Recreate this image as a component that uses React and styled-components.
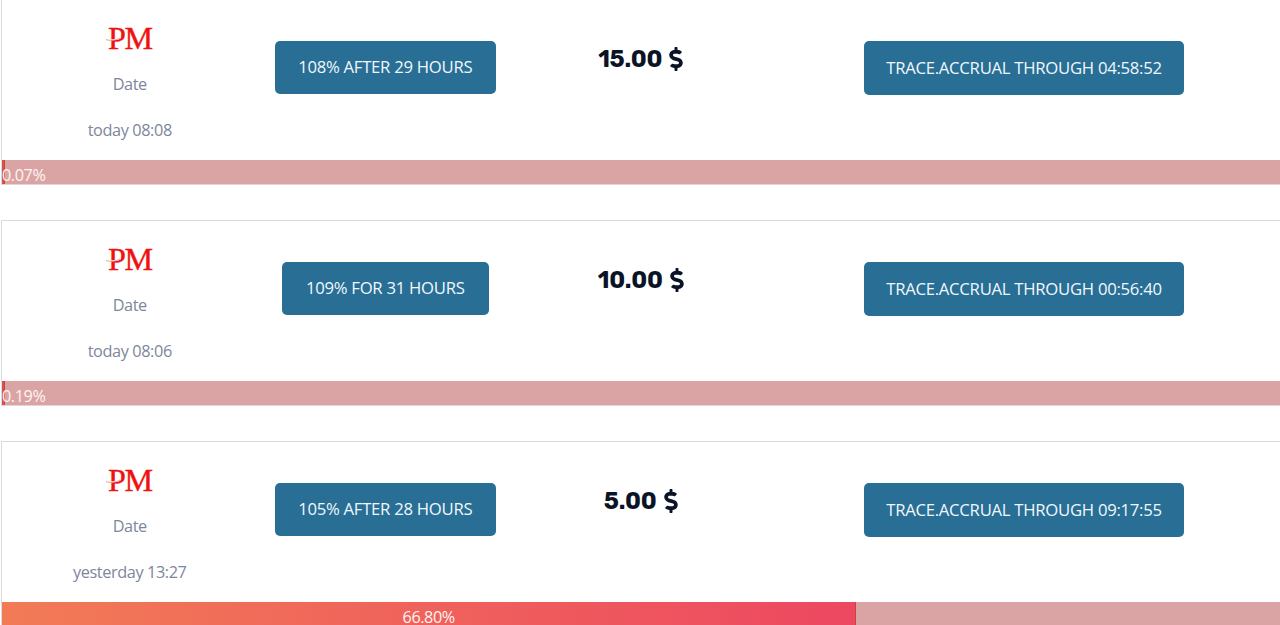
import styled, { createGlobalStyle } from "styled-components";
import { FaDollarSign } from "react-icons/fa";

const GlobalStyle = createGlobalStyle`
    * {
        box-sizing: border-box;
    }

    body {
        margin: 0;
        overflow: hidden;
        background-color: #fff;
        font-family: "Open Sans", "Noto Sans", sans-serif;
        font-size: 16.3px;
        letter-spacing: -0.4px;
        color: #7d879c;
    }
`

const List = styled.main `
    display: flex;
    flex-direction: column;
    gap: 35px;
    width: 1281px;
    height: 626px;
    margin-left: 1px;
    margin-top: -1px;
`

const Card = styled.article `
    flex: none;
    height: 186px;
    border: 1px solid #d9dadb;
    border-bottom-color: #e6d4d4;
`

const Row = styled.div `
    display: grid;
    grid-template-columns: 255.5px 255.5px 255.5px 511px;
    height: 160px;
`

const Cell = styled.div `
    display: flex;
    flex-direction: column;
    align-items: center;
    padding-top: ${props => props.$top}px;
`

const Logo = styled.svg `
    display: block;
    width: 50px;
    height: 44px;
`

const Info = styled.p `
    margin: 0;
    height: 24px;
    line-height: 24px;
    margin-top: ${props => props.$gap}px;
    font-weight: 430;
    white-space: nowrap;
`

const Button = styled.button `
    width: ${props => props.$width}px;
    height: ${props => props.$height}px;
    padding: 0 0 2px;
    border: 0;
    border-radius: 5px;
    background-color: #286e95;
    color: #f1f8fc;
    font-family: inherit;
    font-size: 16.7px;
    font-weight: 430;
    letter-spacing: -0.27px;
    white-space: nowrap;
`

const Amount = styled.h3 `
    display: flex;
    align-items: center;
    gap: 7px;
    margin: 0;
    height: 30px;
    font-family: Rubik, Inter, sans-serif;
    font-size: 23.5px;
    font-weight: 670;
    letter-spacing: -0.2px;
    color: #0b1427;
`

const Track = styled.div `
    height: 24px;
    background-color: #dba4a4;
`

const Fill = styled.div `
    height: 24px;
    border-right: 1px solid #c4473c;
    background: ${props => props.$small ? "#d9534b" : "linear-gradient(90deg, #f27b56, #ed4861)"};
    color: #fff4f2;
    font-size: 16.2px;
    font-weight: 430;
    line-height: 30px;
    text-align: center;
    white-space: nowrap;
`

const deposits = [
    { date: "today 08:08", plan: "108% AFTER 29 HOURS", planWidth: 221, amount: "15.00", left: "04:58:52", percent: "0.07" },
    { date: "today 08:06", plan: "109% FOR 31 HOURS", planWidth: 207, amount: "10.00", left: "00:56:40", percent: "0.19" },
    { date: "yesterday 13:27", plan: "105% AFTER 28 HOURS", planWidth: 221, amount: "5.00", left: "09:17:55", percent: "66.80" },
];

const PaymentLogo = () => (
    <Logo viewBox="0 0 50 44">
        <text
            x="3"
            y="32"
            fill="#f01212"
            stroke="#f01212"
            strokeWidth="0.4"
            fontFamily="Liberation Serif, serif"
            fontSize="32.5"
            textLength="43.5"
            lengthAdjust="spacingAndGlyphs"
            letterSpacing="-1.5"
        >
            PM
        </text>
        <path d="M1 21.500c3 2 10 1.600 15-1" fill="none" stroke="#fff" strokeWidth="1.200" />
        <path d="M1 22.500c4 1.500 10 1 14-1.500" fill="none" stroke="#f58a8a" strokeWidth="0.900" />
    </Logo>
)

const Deposit = ({ item }) => (
    <Card>
        <Row>
            <Cell $top={17}>
                <PaymentLogo />
                <Info $gap={11}>Date</Info>
                <Info $gap={22}>{item.date}</Info>
            </Cell>
            <Cell $top={41}>
                <Button $width={item.planWidth} $height={53}>{item.plan}</Button>
            </Cell>
            <Cell $top={44}>
                <Amount>
                    {item.amount}
                    <FaDollarSign size={24} style={{ width: "14px" }} />
                </Amount>
            </Cell>
            <Cell $top={41}>
                <Button $width={320} $height={54}>TRACE.ACCRUAL THROUGH {item.left}</Button>
            </Cell>
        </Row>
        <Track>
            <Fill $small={item.percent < 1} style={{ width: `${Math.max(item.percent, 0.2)}%` }}>{item.percent}%</Fill>
        </Track>
    </Card>
)

const App = () => {
    return (
        <>
            <GlobalStyle />
            <List>
                {deposits.map(item => <Deposit key={item.left} item={item} />)}
            </List>
        </>
    );
};

export default App;
